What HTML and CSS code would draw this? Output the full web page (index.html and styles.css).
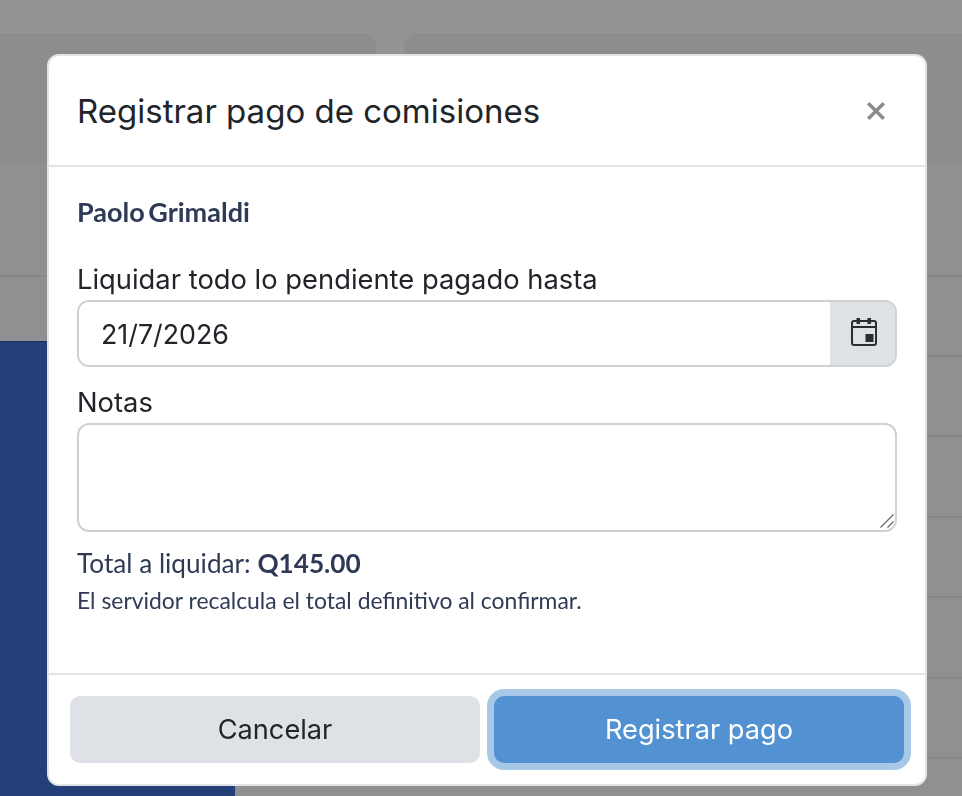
FILE: index.html
```html
<!DOCTYPE html>
<html lang="es">
<head>
<meta charset="utf-8">
<title>Registrar pago de comisiones</title>
<link rel="stylesheet" href="styles.css">
</head>
<body>
<div class="page">
  <div class="topbar"></div>
  <div class="cards"><div class="card card-left"></div><div class="card card-right"></div></div>
  <div class="band"></div>
  <div class="content">
    <aside class="sidebar"></aside>
    <div class="rows">
      <div class="row"><span class="cell cell-a"></span><span class="cell cell-b"></span><span class="cell cell-c"></span></div>
      <div class="row"><span class="cell cell-a"></span><span class="cell cell-b"></span><span class="cell cell-c"></span></div>
      <div class="row"><span class="cell cell-a"></span><span class="cell cell-b"></span><span class="cell cell-c"></span></div>
      <div class="row"><span class="cell cell-a"></span><span class="cell cell-b"></span><span class="cell cell-c"></span></div>
      <div class="row"><span class="cell cell-a"></span><span class="cell cell-b"></span><span class="cell cell-c"></span></div>
      <div class="row"><span class="cell cell-a"></span><span class="cell cell-b"></span><span class="cell cell-c"></span></div>
    </div>
  </div>
</div>
<div class="overlay">
  <div class="modal" role="dialog" aria-labelledby="modal-title">
    <header class="modal-header">
      <h2 class="modal-title" id="modal-title">Registrar pago de comisiones</h2>
      <button class="close" type="button" aria-label="Cerrar">
        <svg class="close-icon" viewBox="0 0 20 20" width="20" height="20"><path d="M2.2 2.2 17.8 17.8M17.8 2.2 2.2 17.8"/></svg>
      </button>
    </header>
    <div class="modal-body">
      <p class="person">Paolo Grimaldi</p>
      <label class="label label-date" for="fecha">Liquidar todo lo pendiente pagado hasta</label>
      <div class="input-group">
        <input class="input" id="fecha" type="text" value="21/7/2026">
        <span class="addon">
          <svg class="cal-icon" viewBox="0 0 28 30" width="28" height="30">
            <rect class="cal-frame" x="2" y="4" width="24" height="24" rx="2"/>
            <path class="cal-frame" d="M2 10H26"/>
            <rect class="cal-fill" x="6.5" y="1" width="3.5" height="6"/>
            <rect class="cal-fill" x="17.5" y="1" width="3.5" height="6"/>
            <rect class="cal-fill" x="15.5" y="17" width="8" height="8"/>
          </svg>
        </span>
      </div>
      <label class="label label-notes" for="notas">Notas</label>
      <div class="notes-wrap">
        <textarea class="notes" id="notas"></textarea>
        <svg class="grip" viewBox="0 0 14 14" width="14" height="14"><path d="M0.5 13.5 13.5 0.5M7.5 13.5 13.5 7.5"/></svg>
      </div>
      <p class="total">Total a liquidar: <strong>Q145.00</strong></p>
      <p class="hint">El servidor recalcula el total definitivo al confirmar.</p>
    </div>
    <footer class="modal-footer">
      <button class="btn btn-cancel" type="button">Cancelar</button>
      <button class="btn btn-primary" type="button">Registrar pago</button>
    </footer>
  </div>
</div>
</body>
</html>
```
FILE: styles.css
```css
* { box-sizing: border-box; }
html, body { margin: 0; height: 100%; }
body { background: #eef0f3; overflow: hidden; font-family: Inter, "Liberation Sans", sans-serif; color: #212529; }

.page { height: 796px; overflow: hidden; display: flex; flex-direction: column; }
.topbar { height: 33px; flex: none; background: #f5f7fa; }
.cards { height: 132px; flex: none; display: flex; gap: 28px; background: #f5f7fa; }
.card { background: #e9ebee; height: 100%; }
.card-left { width: 376px; border-top-right-radius: 14px; }
.card-right { flex: 1; border-top-left-radius: 14px; }
.band { height: 112px; flex: none; border-bottom: 2px solid #dfe1e4; }
.content { display: flex; flex: 1; }
.sidebar { width: 235px; flex: none; margin-top: 64px; background: #3f69cd; border-top: 1px solid #2f4f9a; }
.rows { flex: 1; margin-top: -1px; }
.row { height: 80.5px; display: flex; border-bottom: 2px solid #dfe1e4; }
.cell { display: block; }
.cell-a { width: 445px; }
.cell-b { width: 123px; border-left: 2px solid #dfe1e4; }
.cell-c { flex: 1; border-left: 2px solid #dfe1e4; }

.overlay { position: fixed; inset: 0; background: rgba(0, 0, 0, .4); padding: 54px 0 0 47px; }
.modal { width: 880px; height: 732px; background: #fff; border: 2px solid #e3e4e5; border-radius: 12px; display: flex; flex-direction: column; }
.modal-header { height: 111px; flex: none; display: flex; align-items: center; justify-content: space-between; padding: 0 37px 0 28px; border-bottom: 2px solid #e3e4e5; }
.modal-title { margin: 0; font-size: 33px; line-height: 40px; font-weight: 400; color: #212529; }
.close { width: 24px; height: 24px; padding: 0; border: 0; background: none; display: flex; align-items: center; justify-content: center; }
.close-icon path { fill: none; stroke: #8b8b8b; stroke-width: 3.4; }

.modal-body { flex: 1; padding: 28px 28px 0; }
.person { margin: 0; font: 700 27px/34px Lato, sans-serif; word-spacing: -3px; color: #2f3a56; }
.label { display: block; font-size: 27.35px; line-height: 34px; color: #212529; }
.label-date { margin-top: 34px; }
.label-notes { margin-top: 19px; }
.input-group { display: flex; height: 67px; margin-top: 3px; border: 2px solid #d0d1d2; border-radius: 12px; overflow: hidden; }
.input { flex: 1; min-width: 0; border: 0; outline: 0; padding: 0 22px; background: #fff; font: 400 26.8px/34px Inter, sans-serif; color: #212529; }
.addon { width: 65px; flex: none; background: #dee1e6; display: flex; align-items: center; justify-content: center; }
.cal-icon { margin: 0 0 3px 2px; }
.cal-frame { fill: none; stroke: #2a2e33; stroke-width: 2; }
.cal-fill { fill: #2a2e33; }
.notes-wrap { position: relative; height: 109px; margin-top: 3px; }
.notes { display: block; width: 100%; height: 100%; border: 2px solid #d0d1d2; border-radius: 12px; outline: 0; resize: none; background: #fff; }
.grip { position: absolute; right: 3px; bottom: 4px; }
.grip path { fill: none; stroke: #6f6f6f; stroke-width: 1.4; }
.total { margin: 14px 0 0; font: 400 26.2px/34px Lato, sans-serif; color: #2f3a56; }
.total strong { font-weight: 700; }
.hint { margin: 5px 0 0; font: 400 22.9px/30px Lato, sans-serif; color: #2f3a56; }

.modal-footer { height: 111px; flex: none; display: flex; gap: 14px; padding: 21px 21px 20px; border-top: 2px solid #e3e4e5; }
.btn { flex: 1; height: 67px; border: 0; border-radius: 10px; font: 400 27.2px/34px Inter, sans-serif; }
.btn-cancel { background: #dee1e6; color: #212529; }
.btn-primary { background: #5292d2; color: #fff; box-shadow: 0 0 0 7px #a8c8e8; }
```
